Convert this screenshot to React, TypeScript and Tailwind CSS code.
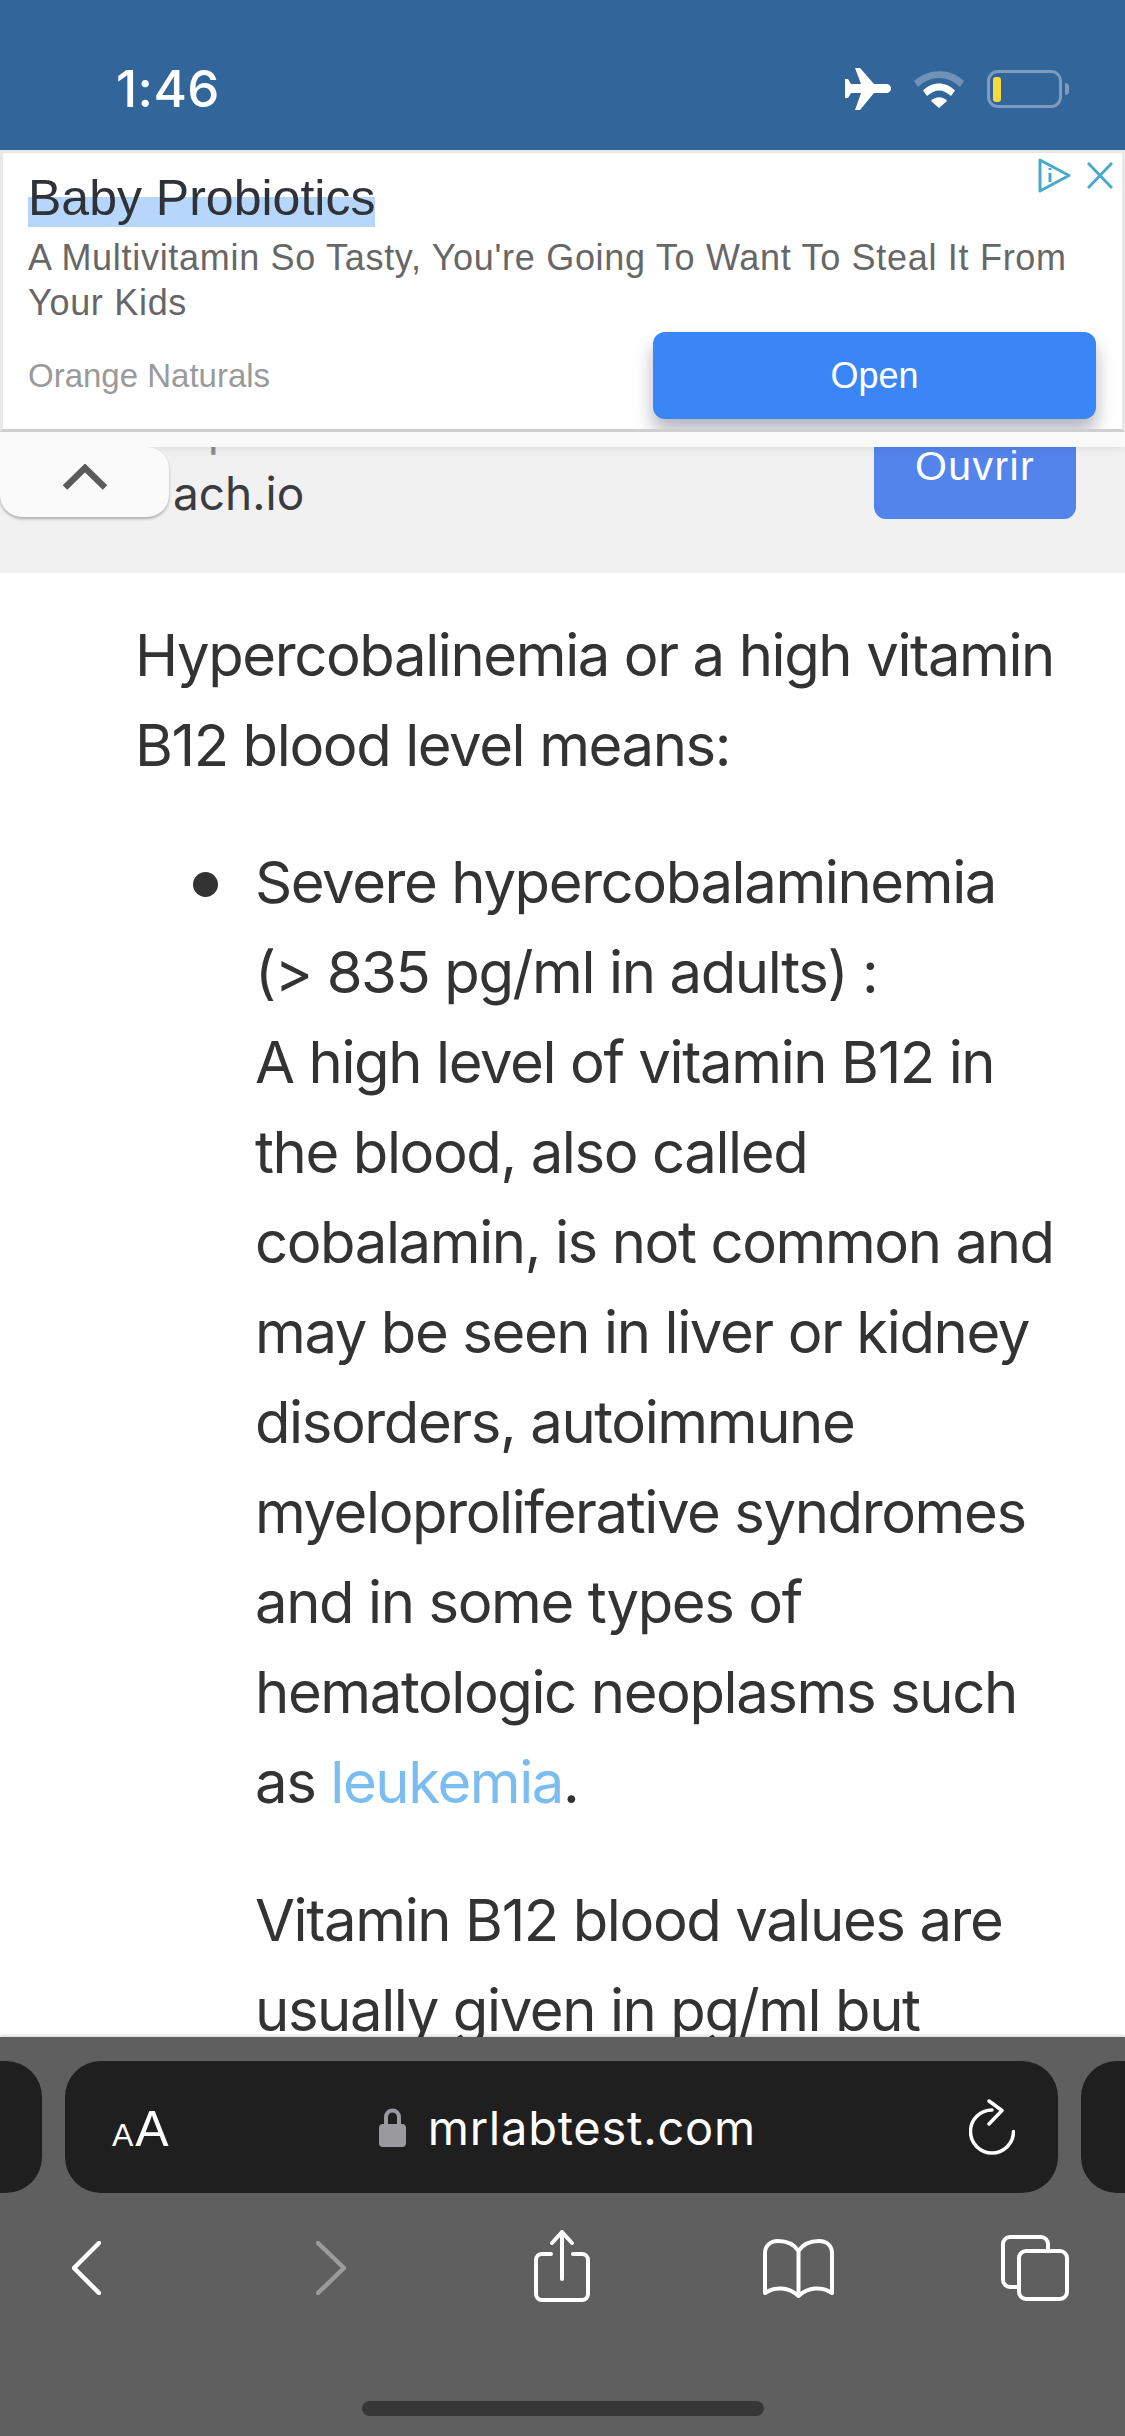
const articleFont = "font-['Inter',sans-serif]";
const adFont = "font-['Liberation_Sans',Arial,sans-serif]";

function StatusBar() {
  return (
    <div className="flex h-[150px] shrink-0 items-center justify-between bg-[#326599] pl-[116px] pr-[56px] pt-[28px]">
      <span className={`${articleFont} text-[51px] leading-[50px] font-medium tracking-[0.4px] text-white`}>1:46</span>
      <div className="flex items-center">
        <svg width="46" height="42" viewBox="0 0 46 42" fill="#fff">
          <path d="M41 16c3 0 5 2 5 4.500s-2 4.500-5 4.500H29L15 42H10L16 25H6L3 30H0V11H3L6 16H16L10 0H15L29 16Z" />
        </svg>
        <svg className="ml-[23px]" width="51" height="37" viewBox="0 0 51 37">
          <path d="M0 10C15-3 36-3 50 10L46 16C33 4 17 4 4 16Z" fill="#fff" fillOpacity="0.3" />
          <path d="M9 19.500C18 10 32 10 41 19.500L37 25C29 17.500 21 17.500 13 25Z" fill="#fff" />
          <path d="M17 30C21 25 29 25 33 30L25 37Z" fill="#fff" />
        </svg>
        <div className="ml-[22px] flex items-center gap-[3px]">
          <div className="flex h-[38px] w-[75px] items-center rounded-[11px] border-[3px] border-[#7e9cc0] pl-[3px]">
            <div className="h-[25px] w-[8px] rounded-[3px] bg-[#f9d73e]" />
          </div>
          <div className="h-[12px] w-[4px] rounded-r-full bg-[#7e9cc0]" />
        </div>
      </div>
    </div>
  );
}

function AdBanner() {
  return (
    <div className={`${adFont} relative z-20 h-[282px] shrink-0 overflow-hidden border-x-[3px] border-b-[3px] border-t-[3px] border-x-[#e8e8e8] border-t-[#e8e8e8] border-b-[#cfcfd2] bg-white`}>
      <div className="absolute right-[9px] top-[5px] flex items-center gap-[16px]">
        <svg width="33" height="35" viewBox="0 0 33 35" fill="none" stroke="#4aa9c9" strokeWidth="3">
          <path d="M2 2v31l29-15.500z" strokeLinejoin="round" />
          <path d="M12 15v9M12 10v2" />
        </svg>
        <svg width="26" height="27" viewBox="0 0 26 27" fill="none" stroke="#4aa9c9" strokeWidth="3">
          <path d="M1 1l24 25M25 1L1 26" />
        </svg>
      </div>
      <div className="flex flex-col pl-[25px] pt-[13px]">
        <h2 className="w-fit bg-[linear-gradient(transparent_31px,#b6d7fb_31px,#b6d7fb_61px,transparent_61px)] text-[50px] leading-[64px] text-[#2f3237]">
          Baby Probiotics
        </h2>
        <p className="mt-[5px] w-[1060px] text-[36px] leading-[45px] tracking-[0.7px] text-[#676767]">
          A Multivitamin So Tasty, You're Going To Want To Steal It From Your Kids
        </p>
        <div className="mt-[7px] flex items-center justify-between pr-[26px]">
          <span className="text-[33px] text-[#9a9a9a]">Orange Naturals</span>
          <button className="flex h-[87px] w-[443px] items-center justify-center rounded-[12px] bg-[#3b86f7] text-[36px] text-white shadow-[0_12px_18px_rgba(70,70,100,0.4)]">
            Open
          </button>
        </div>
      </div>
    </div>
  );
}

function SecondAd() {
  return (
    <>
      <div className="relative z-10 h-[15px] shrink-0 bg-[#fafafa] shadow-[0_2px_8px_rgba(0,0,0,0.08)]" />
      <div className="relative flex h-[126px] shrink-0 justify-between overflow-hidden bg-[#f1f1f1] pl-[173px] pr-[49px]">
        <div className="absolute left-0 top-0 z-10 flex h-[70px] w-[169px] items-start justify-center rounded-b-[22px] rounded-tr-[22px] bg-[#fafafa] pt-[17px] shadow-[0_2px_3px_rgba(0,0,0,0.28)]">
          <svg width="44" height="26" viewBox="0 0 44 26" fill="none" stroke="#5b5b5b" strokeWidth="6.500">
            <path d="M2 23.500L22 4l20 19.500" />
          </svg>
        </div>
        <div className={`${articleFont} -mt-[46px] text-[46px] leading-[60px] whitespace-nowrap text-[#3a3c40]`}>
          <div className="h-[62px] pl-[8px] leading-[56px] text-[#8a8a8a]">ep coo</div>
          <div>ach.io</div>
        </div>
        <button className={`${adFont} h-[72px] w-[202px] rounded-b-[12px] bg-[#5384ec] pb-[34px] text-[41px] leading-[38px] tracking-[1.400px] text-white`}>
          Ouvrir
        </button>
      </div>
    </>
  );
}

function Article() {
  const lines = [
    "A high level of vitamin B12 in",
    "the blood, also called",
    "cobalamin, is not common and",
    "may be seen in liver or kidney",
    "disorders, autoimmune",
    "myeloproliferative syndromes",
    "and in some types of",
    "hematologic neoplasms such",
  ];
  return (
    <div className={`${articleFont} min-h-0 flex-1 overflow-hidden bg-white pl-[135px] text-[58px] leading-[90px] tracking-[-1.400px] text-[#333333]`}>
      <p className="mt-[37px] whitespace-nowrap">
        Hypercobalinemia or a high vitamin
        <br />
        B12 blood level means:
      </p>
      <div className="mt-[47px] flex">
        <div className="flex w-[120px] shrink-0 pl-[58px] pt-[35px]">
          <div className="size-[25px] rounded-full bg-[#333333]" />
        </div>
        <div className="whitespace-nowrap">
          <p>
            Severe hypercobalaminemia
            <br />
            (&gt; 835 pg/ml in adults) :
            {lines.map((line) => (
              <span key={line}>
                <br />
                {line}
              </span>
            ))}
            <br />
            as <span className="text-[#7bbdf0]">leukemia</span>.
          </p>
          <p className="mt-[48px]">
            Vitamin B12 blood values are
            <br />
            usually given in pg/ml but
          </p>
        </div>
      </div>
    </div>
  );
}

function SafariBar() {
  return (
    <div className="relative flex h-[399px] shrink-0 flex-col bg-[#5f5f5f] shadow-[0_-1px_4px_rgba(0,0,0,0.2)]">
      <div className="mt-[24px] flex h-[132px] shrink-0 items-stretch gap-[23px] overflow-hidden">
        <div className="ml-[-40px] w-[82px] shrink-0 rounded-[36px] bg-[#1f1f1f]" />
        <div className="flex w-[993px] shrink-0 items-center justify-between rounded-[36px] bg-[#1f1f1f] pl-[47px] pr-[43px] text-white">
          <span className={`${adFont} flex items-baseline gap-[2px] pt-[3px] leading-none`}>
            <span className="text-[32px]">A</span>
            <span className="text-[50px]">A</span>
          </span>
          <span className="mr-[3px] flex items-center gap-[22px]">
            <svg width="27" height="39" viewBox="0 0 27 39">
              <path d="M7 18V9a6.500 6.500 0 0 1 13 0v9" fill="none" stroke="#99999e" strokeWidth="4" />
              <rect x="0" y="16" width="27" height="23" rx="4" fill="#99999e" />
            </svg>
            <span className={`${articleFont} text-[47px] leading-none tracking-[0.750px]`}>mrlabtest.com</span>
          </span>
          <svg width="46" height="56" viewBox="0 0 46 56" fill="none" stroke="#fff" strokeWidth="3.500" strokeLinecap="round" strokeLinejoin="round">
            <path d="M23 11A21.500 21.500 0 1 0 44.500 32.500" />
            <path d="M20 2l13 9.500-13 13.500" />
          </svg>
        </div>
        <div className="w-[82px] shrink-0 rounded-[36px] bg-[#1f1f1f]" />
      </div>
      <div className="mt-[37px] flex h-[76px] shrink-0 items-center pl-[72px]">
        <svg width="29" height="54" viewBox="0 0 29 54" fill="none" stroke="#fff" strokeWidth="4.500" strokeLinecap="round" strokeLinejoin="round">
          <path d="M27 2L2 27l25 25" />
        </svg>
        <svg className="ml-[215px]" width="30" height="54" viewBox="0 0 30 54" fill="none" stroke="#9b9b9b" strokeWidth="4.500" strokeLinecap="round" strokeLinejoin="round">
          <path d="M2 2l26 25L2 52" />
        </svg>
        <svg className="ml-[188px] self-start" width="56" height="72" viewBox="0 0 56 72" fill="none" stroke="#fff" strokeWidth="4" strokeLinecap="round" strokeLinejoin="round">
          <path d="M17 24H8a6 6 0 0 0-6 6v34a6 6 0 0 0 6 6h40a6 6 0 0 0 6-6V30a6 6 0 0 0-6-6H39" />
          <path d="M28 49V2M18 13L28 2l10 11" />
        </svg>
        <svg className="ml-[173px]" width="71" height="59" viewBox="0 0 71 59" fill="none" stroke="#fff" strokeWidth="4" strokeLinejoin="round">
          <path d="M35.500 12C31 5 24 2 15 2 7 2 2 7 2 14v40c10-7 24-6 33.500 3 9.500-9 23.500-10 33.500-3V14c0-7-5-12-13-12-9 0-16 3-20.500 10zV57" />
        </svg>
        <svg className="ml-[167px]" width="68" height="66" viewBox="0 0 68 66" fill="none" stroke="#fff" strokeWidth="4" strokeLinejoin="round">
          <path d="M18 52H9a7 7 0 0 1-7-7V9a7 7 0 0 1 7-7h31a7 7 0 0 1 7 7v6" />
          <rect x="18" y="16" width="48" height="48" rx="7" />
        </svg>
      </div>
      <div className="mt-[95px] flex justify-center">
        <div className="h-[15px] w-[402px] rounded-full bg-[#373737]" />
      </div>
    </div>
  );
}

export default function App() {
  return (
    <div className="flex h-[2436px] w-[1125px] flex-col overflow-hidden bg-white">
      <StatusBar />
      <AdBanner />
      <SecondAd />
      <Article />
      <SafariBar />
    </div>
  );
}
